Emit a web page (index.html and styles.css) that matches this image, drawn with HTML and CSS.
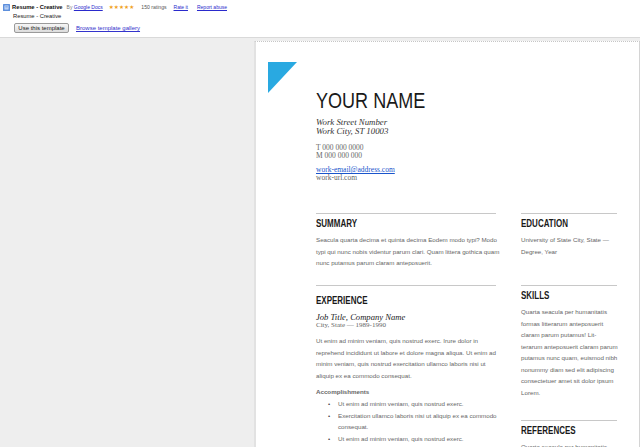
FILE: index.html
```html
<!DOCTYPE html>
<html>
<head>
<meta charset="utf-8">
<title>Resume - Creative</title>
<link rel="stylesheet" href="styles.css">
</head>
<body>
<div class="topbar">
  <div class="row1">
    <svg class="docicon" width="7" height="7" viewBox="0 0 7 7"><rect width="7" height="7" rx="0.5" fill="#5d8fdc"/><rect x="1.5" y="1.5" width="4" height="4" fill="#cfe0fa"/><rect x="2.2" y="2.3" width="2.6" height="0.6" fill="#5d8fdc"/><rect x="2.2" y="3.6" width="2.6" height="0.6" fill="#5d8fdc"/></svg>
    <b class="title">Resume - Creative</b>
    <span class="by">By <a class="lnk">Google Docs</a></span>
    <span class="stars">★★★★★</span>
    <span class="ratings">150 ratings</span>
    <a class="lnk rate">Rate it</a>
    <a class="lnk report">Report abuse</a>
  </div>
  <div class="row2">Resume - Creative</div>
  <div class="row3">
    <button class="use">Use this template</button>
    <a class="browse">Browse template gallery</a>
  </div>
</div>
<div class="main">
  <div class="page">
    <div class="mark"><svg width="29" height="31" viewBox="0 0 29 31"><polygon points="0,0 29,0 0,31" fill="#29a9e1"/></svg></div>
    <div class="content">
      <div class="head">
        <h1 class="name"><span class="narrow">YOUR NAME</span></h1>
        <div class="addr">Work Street Number<br>Work City, ST 10003</div>
        <div class="phone">T 000 000 0000<br>M 000 000 000</div>
        <div class="web"><a class="email">work-email@address.com</a><br>work-url.com</div>
      </div>
      <div class="cols">
        <div class="col-main">
          <section class="sec sec-summary">
            <h2><span class="narrow">SUMMARY</span></h2>
            <p>Seacula quarta decima et quinta decima Eodem modo typi? Modo<br>typi qui nunc nobis videntur parum clari. Quam littera gothica quam<br>nunc putamus parum claram anteposuerit.</p>
          </section>
          <section class="sec sec-exp">
            <h2><span class="narrow">EXPERIENCE</span></h2>
            <div class="job">Job Title, Company Name</div>
            <div class="city">City, State — 1989-1990</div>
            <p class="exp-text">Ut enim ad minim veniam, quis nostrud exerc. Irure dolor in<br>reprehend incididunt ut labore et dolore magna aliqua. Ut enim ad<br>minim veniam, quis nostrud exercitation ullamco laboris nisi ut<br>aliquip ex ea commodo consequat.</p>
            <p class="acc">Accomplishments</p>
            <ul class="bullets">
              <li><span>Ut enim ad minim veniam, quis nostrud exerc.</span></li>
              <li><span>Exercitation ullamco laboris nisi ut aliquip ex ea commodo<br>consequat.</span></li>
              <li><span>Ut enim ad minim veniam, quis nostrud exerc.</span></li>
            </ul>
          </section>
        </div>
        <div class="col-side">
          <section class="sec sec-edu">
            <h2><span class="narrow">EDUCATION</span></h2>
            <p>University of State City, State —<br>Degree, Year</p>
          </section>
          <section class="sec sec-skills">
            <h2><span class="narrow">SKILLS</span></h2>
            <p>Quarta seacula per humanitatis<br>formas litterarum anteposuerit<br>claram parum putamus! Lit-<br>terarum anteposuerit claram parum<br>putamus nunc quam, euismod nibh<br>nonummy diam sed elit adipiscing<br>consectetuer amet sit dolor ipsum<br>Lorem.</p>
          </section>
          <section class="sec sec-refs">
            <h2><span class="narrow">REFERENCES</span></h2>
            <p>Quarta seacula per humanitatis</p>
          </section>
        </div>
      </div>
    </div>
  </div>
</div>
</body>
</html>
```
FILE: styles.css
```css
html, body {
  margin: 0;
  padding: 0;
  height: 447px;
  overflow: hidden;
}
body {
  background: #eeeeee;
  font-family: "Liberation Sans", Arial, sans-serif;
  color: #222;
}

/* ---------- top bar ---------- */
.topbar {
  box-sizing: border-box;
  height: 38px;
  background: #fff;
  border-bottom: 1px solid #d9d9d9;
  padding: 2px 0 0 3px;
}
.row1 {
  display: flex;
  align-items: baseline;
  height: 10px;
  line-height: 10px;
  white-space: nowrap;
}
.docicon {
  align-self: center;
  margin-right: 2px;
}
.title {
  font-size: 5.8px;
  font-weight: bold;
  color: #111;
}
.by {
  font-size: 5px;
  color: #777;
  margin-left: 4px;
}
.lnk {
  color: #2a2acc;
  text-decoration: underline;
  font-size: 5px;
}
.stars {
  font-family: "DejaVu Sans", sans-serif;
  font-size: 5.6px;
  color: #f0a020;
  margin-left: 6px;
  letter-spacing: 0.1px;
}
.ratings {
  font-size: 5.1px;
  color: #555;
  margin-left: 7px;
}
.rate { margin-left: 7px; }
.report { margin-left: 9px; }

.row2 {
  font-size: 5.8px;
  line-height: 9px;
  color: #222;
  padding-left: 10px;
}
.row3 {
  display: flex;
  align-items: center;
  margin-top: 2px;
  padding-left: 11px;
}
.use {
  box-sizing: border-box;
  width: 55px;
  height: 10px;
  padding: 0;
  font-family: "Liberation Sans", Arial, sans-serif;
  font-size: 6px;
  color: #222;
  background: linear-gradient(#f6f6f6, #dcdcdc);
  border: 1px solid #9a9a9a;
  border-radius: 2px;
}
.browse {
  margin-left: 7px;
  font-size: 6px;
  color: #3333cc;
  text-decoration: underline;
}

/* ---------- document ---------- */
.main {
  padding: 3px 0 0 254px;
}
.page {
  display: flex;
  height: 520px;
  background: #fff;
  border-left: 2px solid #e2e2e2;
  border-right: 1px solid #d4d4d4;
  border-top: 1px dotted #c6c6c6;
  padding-top: 20px;
}
.mark {
  flex: none;
  box-sizing: border-box;
  width: 60px;
  padding-left: 12px;
}
.mark svg { display: block; }
.content {
  width: 301px;
}

.narrow {
  display: inline-block;
  transform: scaleX(0.8);
  transform-origin: 0 50%;
  white-space: nowrap;
}

.name {
  margin: 26px 0 0;
  font-family: "Liberation Sans", Arial, sans-serif;
  font-weight: normal;
  font-size: 22px;
  line-height: 26px;
  color: #1a1a1a;
}
.name .narrow { transform: scaleX(0.82); }
.addr {
  margin-top: 4px;
  font-family: "Liberation Serif", "Times New Roman", serif;
  font-style: italic;
  font-size: 8.8px;
  line-height: 9px;
  color: #333;
}
.phone {
  margin-top: 8px;
  font-family: "Liberation Serif", "Times New Roman", serif;
  font-size: 7.5px;
  line-height: 7.5px;
  color: #666;
}
.web {
  margin-top: 7px;
  font-family: "Liberation Serif", "Times New Roman", serif;
  font-size: 7.5px;
  line-height: 7.5px;
  color: #666;
}
.email {
  color: #1a55cc;
  text-decoration: underline;
}

.cols {
  display: flex;
  gap: 25px;
  margin-top: 32px;
}
.col-main { width: 180px; flex: none; }
.col-side { width: 96px; flex: none; }

.sec {
  border-top: 1px solid #c8c8c8;
}
.sec h2 {
  margin: 4px 0 4px;
  font-family: "Liberation Sans", Arial, sans-serif;
  font-weight: bold;
  font-size: 10px;
  line-height: 12px;
  color: #1a1a1a;
}
.sec p {
  margin: 0;
  font-size: 6.2px;
  line-height: 11.5px;
  color: #666;
  white-space: nowrap;
}

.sec-exp { margin-top: 16.5px; }
.sec-exp h2 { margin-top: 9px; margin-bottom: 0; }
.job {
  margin-top: 6px;
  font-family: "Liberation Serif", "Times New Roman", serif;
  font-style: italic;
  font-size: 8.6px;
  line-height: 8.5px;
  color: #222;
}
.city {
  font-family: "Liberation Serif", "Times New Roman", serif;
  font-size: 7px;
  line-height: 7.5px;
  color: #666;
}
.sec p.exp-text { margin-top: 6px; }
.sec p.acc {
  margin-top: 5px;
  font-weight: bold;
  color: #666;
}
.bullets {
  list-style: none;
  margin: 0.5px 0 0;
  padding: 0 0 0 12px;
  font-size: 6.2px;
  line-height: 11.5px;
  color: #666;
  white-space: nowrap;
}
.bullets li {
  display: flex;
}
.bullets li::before {
  content: "\2022";
  flex: none;
  width: 10px;
  color: #444;
}

.sec-skills { margin-top: 28px; }
.sec-refs { margin-top: 22px; }
```
